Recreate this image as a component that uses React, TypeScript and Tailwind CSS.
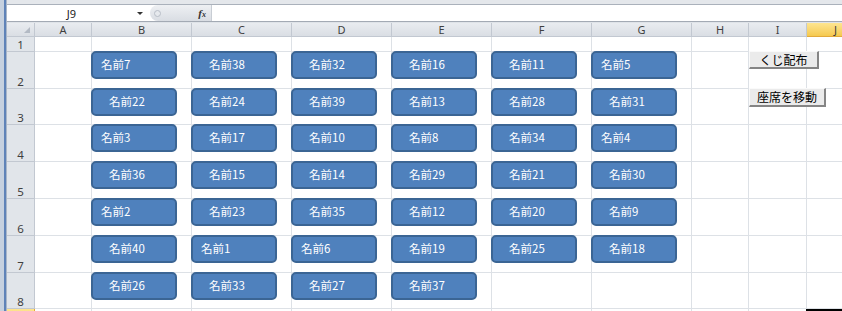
import React from "react";

const names: (string | null)[][] = [
  ["名前7", "名前38", "名前32", "名前16", "名前11", "名前5"],
  ["名前22", "名前24", "名前39", "名前13", "名前28", "名前31"],
  ["名前3", "名前17", "名前10", "名前8", "名前34", "名前4"],
  ["名前36", "名前15", "名前14", "名前29", "名前21", "名前30"],
  ["名前2", "名前23", "名前35", "名前12", "名前20", "名前9"],
  ["名前40", "名前1", "名前6", "名前19", "名前25", "名前18"],
  ["名前26", "名前33", "名前27", "名前37", null, null],
];

const shortNames = new Set(["名前1", "名前2", "名前3", "名前4", "名前5", "名前6", "名前7"]);
const cols = ["A", "B", "C", "D", "E", "F", "G", "H", "I", "J"];

const hdr =
  "flex items-center justify-center border-r border-b border-[#c2c8d1] bg-gradient-to-b from-[#e9ecf0] to-[#dadee4] text-[11px] leading-none text-[#3f3f3f]";
const rowHdr =
  "flex items-end justify-center pb-[1px] border-r border-b border-[#c2c8d1] bg-[#e1e5ea] text-[11.5px] leading-none text-[#3f3f3f]";
const cell = "border-r border-b border-[#dde1e6] min-w-0";

function Shape({ name }: { name: string }) {
  const pad = shortNames.has(name) ? "pl-[8px]" : "pl-[16px]";
  return (
    <div
      className={`-mt-px -ml-px flex h-[28px] w-[86px] items-center rounded-[5px] border-2 border-[#3b6594] bg-[#4f81bd] ${pad} text-[11.5px] leading-none text-white`}
      style={{ fontFamily: '"Noto Sans CJK JP", "Noto Sans", sans-serif' }}
    >
      {name}
    </div>
  );
}

function FormButton({ label, w, h }: { label: string; w: string; h: string }) {
  return (
    <div
      className={`-mt-px flex ${w} ${h} items-center justify-center border-l border-t border-[#fafafa] border-r-2 border-b-2 border-r-[#858585] border-b-[#858585] bg-[#ebebeb] text-[12px] leading-none text-black`}
      style={{ fontFamily: '"Noto Sans CJK JP", sans-serif' }}
    >
      {label}
    </div>
  );
}

export default function App() {
  const dataRows = names.length; // rows 2..8
  return (
    <div
      className="flex h-[311px] w-[842px] overflow-hidden bg-white"
      style={{ fontFamily: '"Noto Sans", "Liberation Sans", sans-serif' }}
    >
      {/* left window frame */}
      <div className="flex h-full w-[7px] shrink-0">
        <div className="h-full w-[4px] bg-[#c6d1df]" />
        <div className="h-full w-[2px] bg-[#5f83b8]" />
        <div className="h-full w-[1px] bg-[#a8b6c9]" />
      </div>

      <div className="flex min-w-0 flex-1 flex-col">
        {/* ribbon bottom strip */}
        <div className="h-[5px] shrink-0 border-b border-[#aab1bb] bg-[#e4e7eb]" />

        {/* formula bar */}
        <div className="flex h-[16px] shrink-0 items-stretch bg-white">
          <div className="flex w-[143px] items-center">
            <div className="flex-1 text-center text-[11px] leading-none text-[#222]">J9</div>
            <svg width="8" height="5" viewBox="0 0 8 5" className="mr-[6px]">
              <path d="M1 1 L7 1 L4 4 Z" fill="#333" />
            </svg>
          </div>
          <div className="flex w-[61px] items-center justify-between rounded-l-full bg-gradient-to-b from-[#eef0f3] to-[#d9dde3] pl-[4px] pr-[5px]">
            <div className="h-[7px] w-[7px] rounded-full border border-[#b8bec7] bg-[#e6e9ed]" />
            <span
              className="text-[11px] font-bold italic leading-none text-[#333]"
              style={{ fontFamily: '"Liberation Serif", serif' }}
            >
              f<span className="text-[8px]">x</span>
            </span>
          </div>
          <div className="flex-1 border-l border-[#c8cdd4] bg-white" />
        </div>

        {/* separator */}
        <div className="h-[2px] shrink-0 border-t border-[#a3aab4] bg-[#dfe3e8]" />

        {/* sheet grid */}
        <div className="min-h-0 flex-1 overflow-hidden">
          <div
            className="grid w-[893px]"
            style={{
              gridTemplateColumns: "28px 57px repeat(6, 100px) 57px 58px 58px",
              gridTemplateRows: "14px 15px 37px 36px 37px 37px 37px 37px 36px 20px",
            }}
          >
            {/* header row */}
            <div className={`${hdr} relative`}>
              <svg width="6" height="6" viewBox="0 0 6 6" className="absolute bottom-[3px] right-[4px]">
                <path d="M6 0 L6 6 L0 6 Z" fill="#b3bac4" />
              </svg>
            </div>
            {cols.map((c) =>
              c === "J" ? (
                <div
                  key={c}
                  className="flex items-center justify-center border-r border-b border-[#e2a93a] bg-gradient-to-b from-[#fde58f] to-[#f5c94e] text-[11px] leading-none text-[#3f3f3f]"
                >
                  {c}
                </div>
              ) : (
                <div key={c} className={hdr}>
                  {c}
                </div>
              )
            )}

            {/* row 1 */}
            <div className={rowHdr}>1</div>
            {cols.map((c) => (
              <div key={`1${c}`} className={cell} />
            ))}

            {/* rows 2..8 */}
            {Array.from({ length: dataRows }).map((_, r) => (
              <React.Fragment key={r}>
                <div className={rowHdr}>{r + 2}</div>
                {cols.map((c, ci) => {
                  let content: React.ReactNode = null;
                  if (ci >= 1 && ci <= 6) {
                    const n = names[r][ci - 1];
                    if (n) content = <Shape name={n} />;
                  }
                  if (c === "I" && r === 0) content = <FormButton label="くじ配布" w="w-[70px]" h="h-[18px]" />;
                  if (c === "I" && r === 1) content = <FormButton label="座席を移動" w="w-[77px]" h="h-[19px]" />;
                  return (
                    <div key={`${r}${c}`} className={cell}>
                      {content}
                    </div>
                  );
                })}
              </React.Fragment>
            ))}

            {/* row 9 */}
            <div className="border-r border-[#e2a93a] bg-gradient-to-b from-[#fde58f] to-[#f5c94e]" />
            {cols.map((c) =>
              c === "J" ? (
                <div key={`9${c}`} className="-ml-px border-t-2 border-l-2 border-black" />
              ) : (
                <div key={`9${c}`} className={cell} />
              )
            )}
          </div>
        </div>
      </div>
    </div>
  );
}
